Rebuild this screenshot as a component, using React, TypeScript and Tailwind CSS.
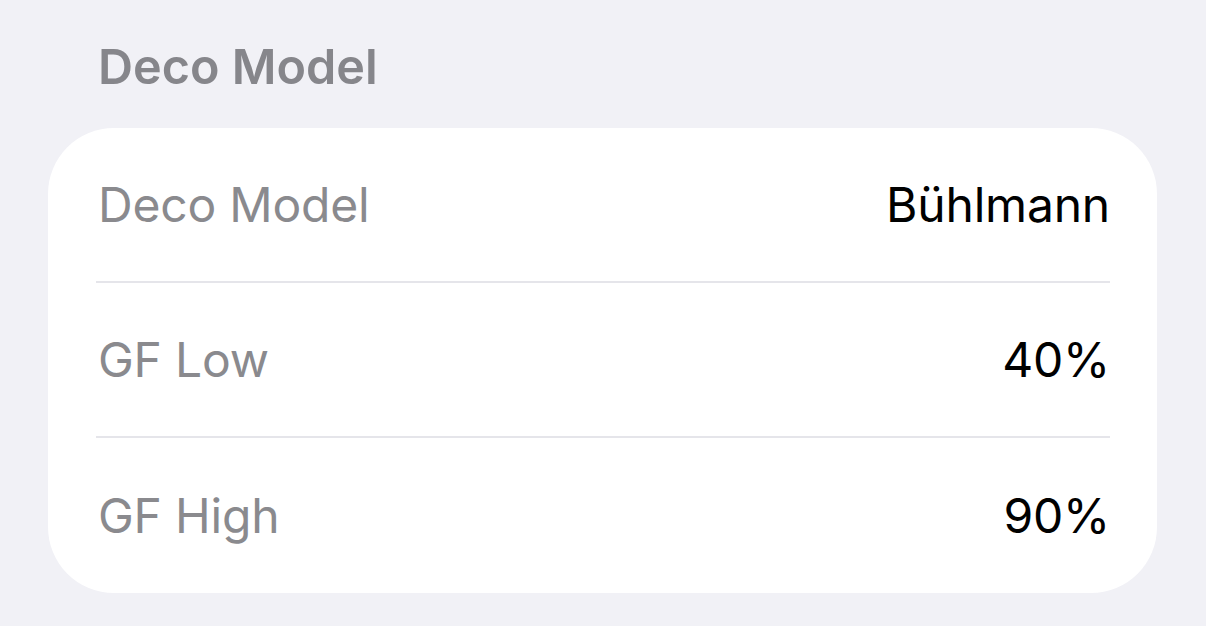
const rows = [
  { label: "Deco Model", value: "Bühlmann" },
  { label: "GF Low", value: "40%" },
  { label: "GF High", value: "90%" },
];

export default function App() {
  return (
    <div
      className="min-h-screen w-full bg-[#f1f1f6] pt-[38px]"
      style={{ fontFamily: "Inter, 'Noto Sans', sans-serif" }}
    >
      <h2 className="pl-[98px] text-[48.5px] font-semibold leading-[58px] text-[#86868b]">
        Deco Model
      </h2>
      <div className="mt-[32px] ml-[48px] w-[1109px] rounded-[66px] bg-white pl-[48px] pr-[47px]">
        {rows.map((row, i) => (
          <div
            key={row.label}
            className={
              "flex h-[155px] items-center justify-between " +
              (i < rows.length - 1 ? "border-b-2 border-[#e5e5ea]" : "")
            }
          >
            <span className="pl-[2px] text-[48px] leading-[58px] tracking-[-0.2px] text-[#8a8a8e]">
              {row.label}
            </span>
            <span className="text-[48px] leading-[58px] tracking-[-0.2px] text-black">
              {row.value}
            </span>
          </div>
        ))}
      </div>
    </div>
  );
}
